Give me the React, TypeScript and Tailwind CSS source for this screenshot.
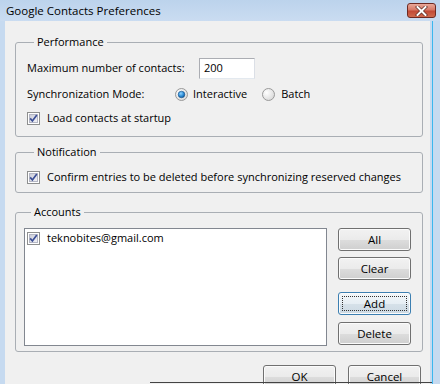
import React from "react";

const CheckBox = () => (
  <svg width="13" height="13" viewBox="0 0 13 13" className="shrink-0">
    <defs>
      <linearGradient id="cbfill" x1="0" y1="0" x2="1" y2="1">
        <stop offset="0" stopColor="#c9cbd6" />
        <stop offset="1" stopColor="#f4f4f8" />
      </linearGradient>
    </defs>
    <rect x="0.5" y="0.5" width="12" height="12" fill="#fff" stroke="#8e8f8f" />
    <rect x="2.5" y="2.5" width="8" height="8" fill="url(#cbfill)" stroke="#b4b6c4" />
    <path d="M3.2 6.4 L5.4 9 L9.8 3" fill="none" stroke="#3b4e96" strokeWidth="1.7" />
  </svg>
);

const Radio = ({ checked }: { checked?: boolean }) => (
  <svg width="13" height="13" viewBox="0 0 13 13" className="shrink-0">
    <defs>
      <radialGradient id="rdoff" cx="0.35" cy="0.35" r="0.8">
        <stop offset="0" stopColor="#ffffff" />
        <stop offset="1" stopColor="#d4d4d4" />
      </radialGradient>
      <radialGradient id="rdon" cx="0.4" cy="0.35" r="0.7">
        <stop offset="0" stopColor="#8fd3ff" />
        <stop offset="0.6" stopColor="#2a8ad4" />
        <stop offset="1" stopColor="#0d4f8c" />
      </radialGradient>
    </defs>
    <circle cx="6.5" cy="6.5" r="6" fill="url(#rdoff)" stroke="#999" />
    {checked && <circle cx="6.5" cy="6.5" r="3.3" fill="url(#rdon)" stroke="#15518a" strokeWidth="0.6" />}
  </svg>
);

const Button = ({ label, focused, className = "" }: { label: string; focused?: boolean; className?: string }) => (
  <button
    className={
      "relative h-[23px] w-[73px] rounded-[3px] border text-[11.5px] leading-none text-black shadow-[inset_0_0_0_1px_#fbfbfb] " +
      (focused
        ? "border-[#3c7fb1] bg-[linear-gradient(#f3f7fa_0%,#e6eef4_50%,#d6e1e9_51%,#ccd9e3_100%)] "
        : "border-[#707070] bg-[linear-gradient(#f2f2f2_0%,#ebebeb_50%,#dddddd_51%,#cfcfcf_100%)] ") +
      className
    }
  >
    {focused && <span className="absolute inset-[3px] border border-dotted border-[#333]" />}
    {label}
  </button>
);

export default function App() {
  return (
    <div className="relative flex h-[384px] w-[440px] flex-col overflow-hidden bg-[#c6daf0] font-['Segoe_UI','Open_Sans',sans-serif] text-[11px] text-black">
      {/* title bar */}
      <div className="flex h-[21px] shrink-0 items-center justify-between bg-[linear-gradient(#bcd3ec,#cadcf1)] pl-[6px] pr-[4px]">
        <span className="text-[11.5px] leading-none">Google Contacts Preferences</span>
        <div className="flex h-[15px] w-[29px] items-center justify-center rounded-[3px] border border-[#6e2a22] bg-[linear-gradient(#e9a99a_0%,#d67866_45%,#c24a36_55%,#cf6a4e_100%)]">
          <svg width="13" height="10" viewBox="0 0 13 10">
            <path d="M2.5 1 L10.5 9 M10.5 1 L2.5 9" stroke="#5a2a22" strokeWidth="3.4" strokeLinecap="square" />
            <path d="M2.5 1 L10.5 9 M10.5 1 L2.5 9" stroke="#fff" strokeWidth="2" strokeLinecap="square" />
          </svg>
        </div>
      </div>

      <div className="flex flex-1">
        <div className="w-[5px] shrink-0 bg-[#c6daf0]" />
        <div className="flex flex-1 flex-col bg-[#f0f0f0] pl-[10px] pr-[7px]">
          {/* Performance */}
          <fieldset className="mt-[13px] rounded-[3px] border border-[#a9aeb4] pb-[9px] pl-[11px] pt-[8px]">
            <legend className="ml-[7px] px-[3px] leading-[16px]">Performance</legend>
            <div className="flex h-[21px] items-center">
              <span className="w-[172px]">Maximum number of contacts:</span>
              <div className="flex h-[21px] w-[56px] items-center border border-[#abadb3] border-b-[#e3e9ef] border-r-[#dbdfe6] bg-white pl-[4px]">200</div>
            </div>
            <div className="mt-[6px] flex h-[18px] items-center">
              <span className="w-[148px]">Synchronization Mode:</span>
              <Radio checked />
              <span className="ml-[5px]">Interactive</span>
              <span className="ml-[15px] flex"><Radio /></span>
              <span className="ml-[6px]">Batch</span>
            </div>
            <div className="mt-[6px] flex h-[18px] items-center gap-[7px]">
              <CheckBox />
              <span>Load contacts at startup</span>
            </div>
          </fieldset>

          {/* Notification */}
          <fieldset className="mt-[7px] rounded-[3px] border border-[#a9aeb4] pb-[6px] pl-[11px] pt-[8px]">
            <legend className="ml-[7px] px-[3px] leading-[16px]">Notification</legend>
            <div className="flex h-[18px] items-center gap-[7px]">
              <CheckBox />
              <span className="whitespace-nowrap">Confirm entries to be deleted before synchronizing reserved changes</span>
            </div>
          </fieldset>

          {/* Accounts */}
          <fieldset className="mt-[11px] rounded-[3px] border border-[#a9aeb4] pb-[5px] pl-[8px] pr-[11px] pt-[8px]">
            <legend className="ml-[7px] px-[3px] leading-[16px]">Accounts</legend>
            <div className="flex gap-[11px]">
              <div className="h-[118px] flex-1 border border-[#828790] bg-white pl-[2px] pt-[1px]">
                <div className="flex h-[17px] items-center gap-[7px]">
                  <CheckBox />
                  <span>teknobites@gmail.com</span>
                </div>
              </div>
              <div className="flex flex-col">
                <Button label="All" />
                <Button label="Clear" className="mt-[6px]" />
                <Button label="Add" focused className="mt-[12px]" />
                <Button label="Delete" className="mt-[7px]" />
              </div>
            </div>
          </fieldset>

          <div className="mt-[13px] flex justify-end gap-[12px] pr-[2px]">
            <Button label="OK" />
            <Button label="Cancel" />
          </div>
        </div>
        <div className="w-[10px] shrink-0 bg-[#c6daf0] pl-[2px]">
          <div className="h-full w-px bg-[#3bb6ee]" />
        </div>
      </div>

      {/* stray line across the bottom of the capture */}
      <div className="absolute left-[150px] right-[8px] top-[382px] h-px bg-[#444]" />
    </div>
  );
}
